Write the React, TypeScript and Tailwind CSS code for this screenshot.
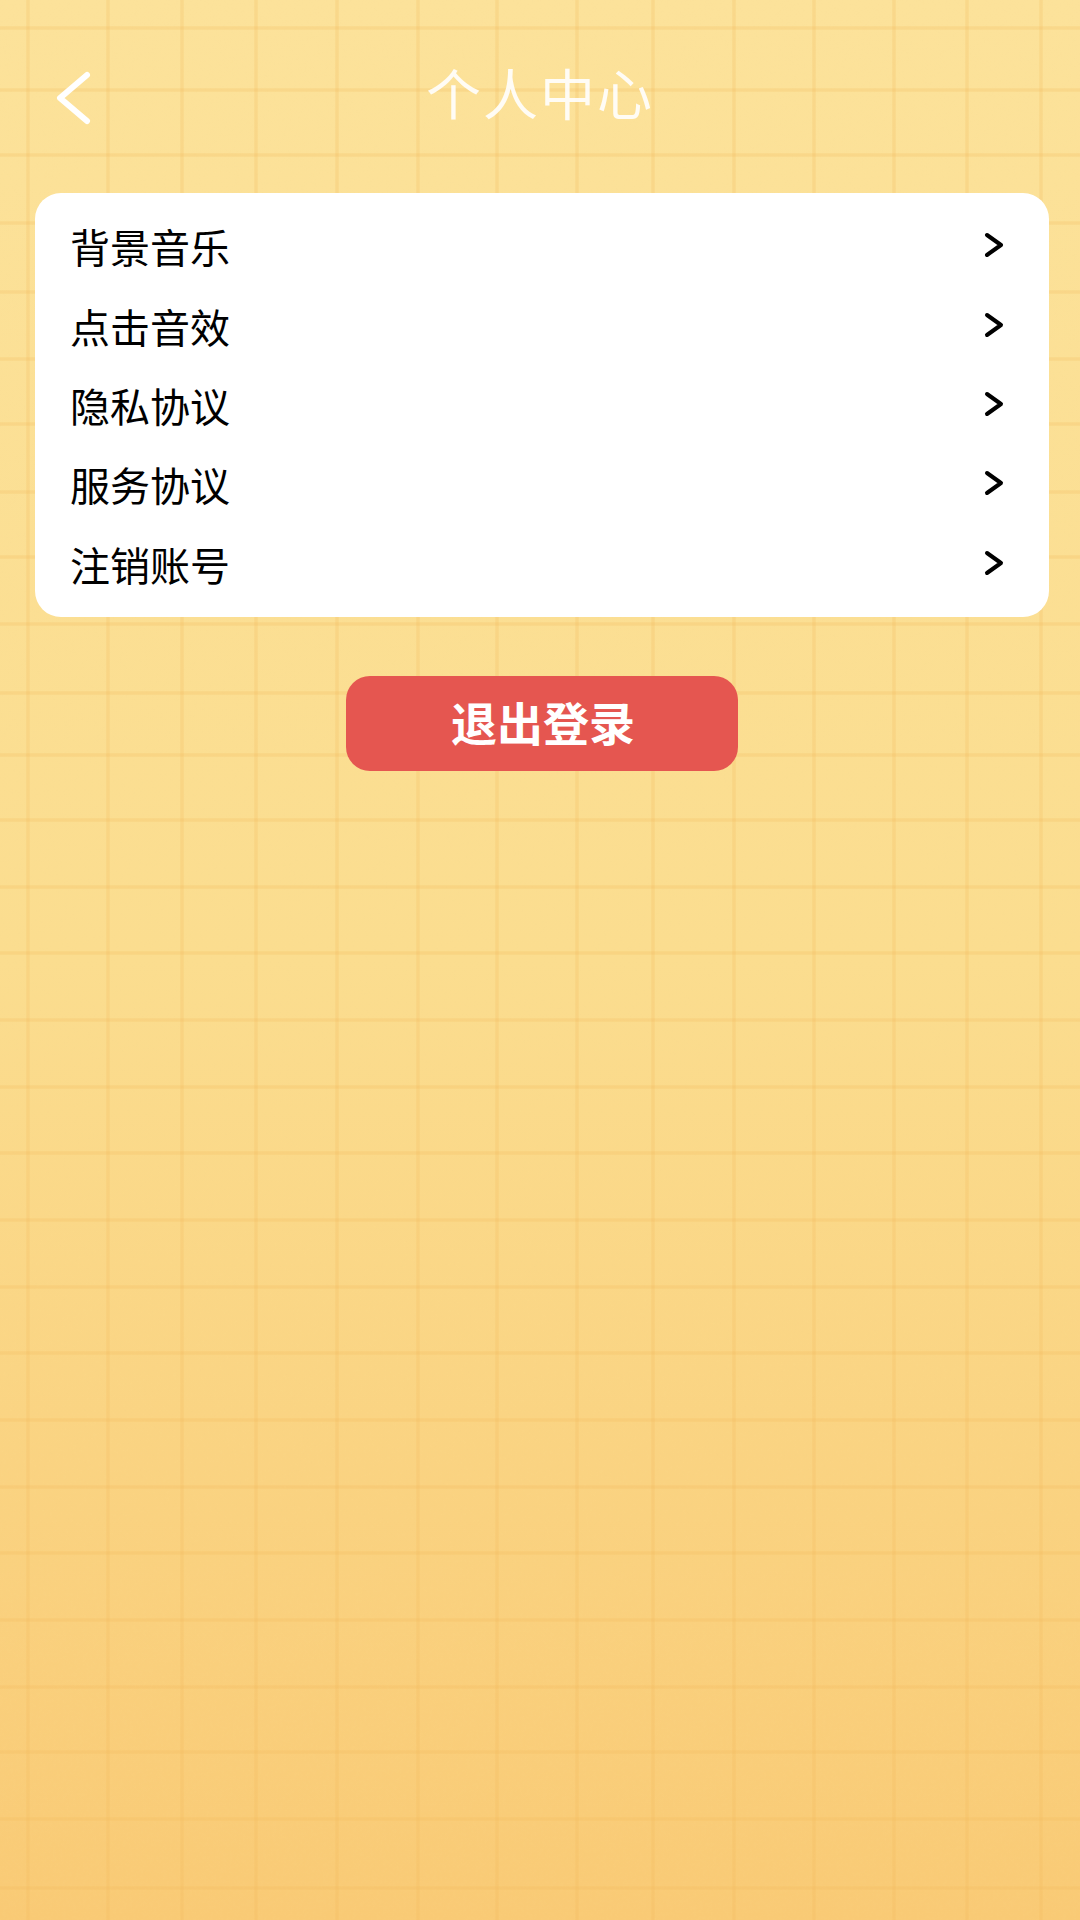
const VERTICAL_LINES = [28, 108, 182, 256, 337, 418, 497, 577, 653, 734, 814, 894, 967, 1041]
const HORIZONTAL_LINES = [28, 90, 155, 223, 292, 359, 424, 492, 557, 624, 693, 755, 820, 887, 953, 1020, 1087, 1153, 1220, 1287, 1353, 1420, 1487, 1553, 1620, 1687, 1752, 1819, 1888]

const MENU_ITEMS = ['背景音乐', '点击音效', '隐私协议', '服务协议', '注销账号']

const CJK_FONT = "font-['Noto_Sans_CJK_SC','Noto_Sans',sans-serif]"

function PaperGrid() {
    return (
        <svg className="absolute inset-0 h-full w-full" viewBox="0 0 1080 1920">
            <filter id="paper-noise">
                <feTurbulence type="fractalNoise" baseFrequency="0.3" numOctaves="2" seed="4" />
                <feColorMatrix values="0 0 0 0 0.95  0 0 0 0 0.72  0 0 0 0 0.3  0 0 0 0.4 -0.1" />
            </filter>
            <rect width="1080" height="1920" filter="url(#paper-noise)" opacity="0.2" />
            <g stroke="#f2b95e" strokeOpacity="0.24" strokeWidth="3.5">
                {VERTICAL_LINES.map(x => (
                    <line key={x} x1={x} y1="0" x2={x} y2="1920" />
                ))}
                {HORIZONTAL_LINES.map(y => (
                    <line key={y} x1="0" y1={y} x2="1080" y2={y} />
                ))}
            </g>
        </svg>
    )
}

export default function App() {
    return (
        <div className={`relative h-[1920px] w-[1080px] overflow-hidden bg-linear-to-b from-[#fce29a] via-[#fbdd8f] via-50% to-[#f9ca75] ${CJK_FONT}`}>
            <PaperGrid />

            <div className="relative flex flex-col">
                {/* Cabecera */}
                <header className="grid h-[193px] grid-cols-[1fr_auto_1fr] items-start px-[54px] pt-[68px]">
                    <button className="justify-self-start">
                        <svg width="38" height="60" viewBox="0 0 38 60" fill="none">
                            <path d="M33 7 L6 30 L33 53" stroke="#fff" strokeWidth="6" strokeLinecap="round" strokeLinejoin="round" />
                        </svg>
                    </button>
                    <h1 className="-mt-[8px] text-[55px] leading-[62px] font-normal tracking-[2px] text-white/90">个人中心</h1>
                </header>

                {/* Opciones */}
                <ul className="mx-[35px] flex h-[424px] w-[1014px] flex-col rounded-[26px] bg-white pt-[15px]">
                    {MENU_ITEMS.map(item => (
                        <li key={item} className="flex h-[79.4px] items-center justify-between pr-[45px] pl-[35px]">
                            <span className="-mt-[3px] text-[40px] leading-none text-black">{item}</span>
                            <svg className="-mt-[5px]" width="20" height="26" viewBox="0 0 20 26" fill="none">
                                <path d="M3 3 L17 13 L3 23" stroke="#000" strokeWidth="4" strokeLinecap="round" strokeLinejoin="round" />
                            </svg>
                        </li>
                    ))}
                </ul>

                <button className="mt-[59px] ml-[346px] flex h-[95px] w-[392px] items-center justify-center rounded-[24px] bg-[#e55650] pb-[4px] pl-[2px] text-[46px] font-bold text-white">
                    退出登录
                </button>
            </div>
        </div>
    )
}
